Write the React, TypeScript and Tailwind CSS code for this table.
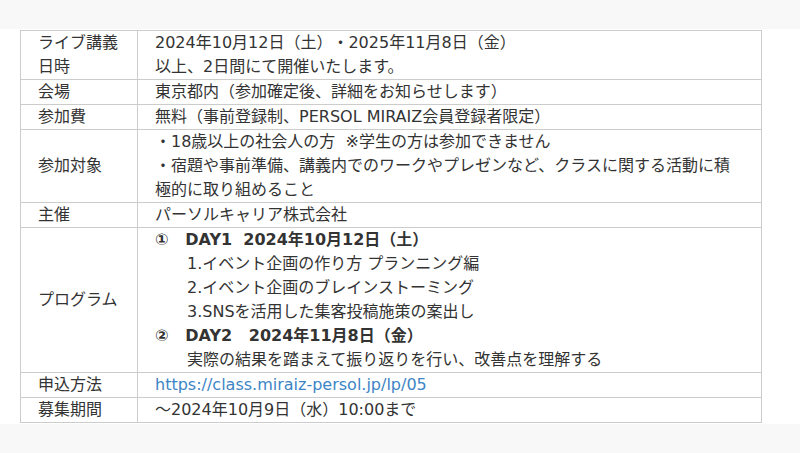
import React from "react";

const font = { fontFamily: '"DejaVu Sans", "Noto Sans CJK JP", sans-serif' };

function Row({ label, children }: { label: React.ReactNode; children: React.ReactNode }) {
  return (
    <tr>
      <td className="w-[117px] border border-[#cccccc] pl-[17px] pr-2 align-middle">{label}</td>
      <td className="border border-[#cccccc] pl-[17px] pr-[24px] align-middle">{children}</td>
    </tr>
  );
}

export default function App() {
  return (
    <div
      className="w-[800px] h-[453px] bg-[#f8f8f8] text-[#333333] text-[16px] leading-[24px] [text-spacing-trim:space-all]"
      style={font}
    >
      <div className="h-[29px]" />
      <div className="bg-white pt-[1px] pb-[1px] pl-[20px] pr-[38px]">
        <table className="w-[742px] border-collapse">
          <tbody>
            <Row label={<>ライブ講義<br />日時</>}>
              2024年10月12日（土）・2025年11月8日（金）<br />以上、2日間にて開催いたします。
            </Row>
            <Row label="会場">東京都内（参加確定後、詳細をお知らせします）</Row>
            <Row label="参加費">無料（事前登録制、PERSOL MIRAIZ会員登録者限定）</Row>
            <Row label="参加対象">
              ・18歳以上の社会人の方&nbsp; ※学生の方は参加できません<br />
              ・宿題や事前準備、講義内でのワークやプレゼンなど、クラスに関する活動に積極的に取り組めること
            </Row>
            <Row label="主催">パーソルキャリア株式会社</Row>
            <Row label="プログラム">
              <div className="font-bold">①&nbsp;&nbsp; DAY1&nbsp; 2024年10月12日（土）</div>
              <div className="pl-[32px]">1.イベント企画の作り方 プランニング編</div>
              <div className="pl-[32px]">2.イベント企画のブレインストーミング</div>
              <div className="pl-[32px]">3.SNSを活用した集客投稿施策の案出し</div>
              <div className="font-bold">②&nbsp;&nbsp; DAY2&nbsp;&nbsp; 2024年11月8日（金）</div>
              <div className="pl-[32px]">実際の結果を踏まえて振り返りを行い、改善点を理解する</div>
            </Row>
            <Row label="申込方法">
              <span className="text-[#3d85c6]">https://class.miraiz-persol.jp/lp/05</span>
            </Row>
            <Row label="募集期間">～2024年10月9日（水）10:00まで</Row>
          </tbody>
        </table>
      </div>
    </div>
  );
}
